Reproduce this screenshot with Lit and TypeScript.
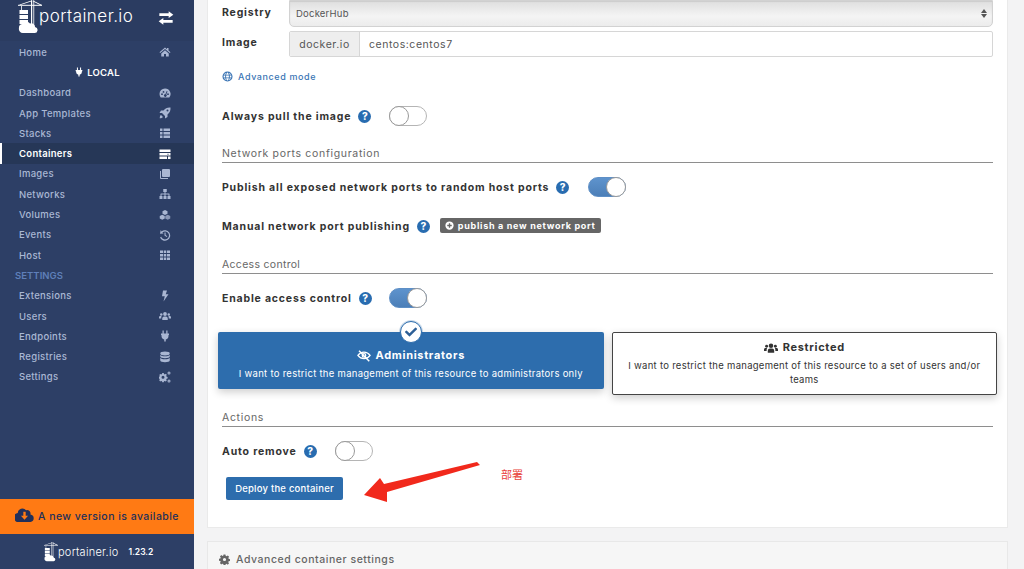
import { LitElement, html, css, svg } from "lit";
import { customElement } from "lit/decorators.js";

const ICONS: Record<string, unknown> = {
  home: svg`<path d="M12 3 1 12.5l1.400 1.600L12 6l9.600 8.100 1.400-1.600-4-3.400V4h-3v2.600z"/><path d="M4.500 15 12 8.600l7.500 6.400V21h-5.500v-5h-4v5H4.500z"/>`,
  gauge: svg`<path fill-rule="evenodd" d="M12 3a11 11 0 0 0-11 11c0 2.600.9 5 2.400 7h17.200A11 11 0 0 0 12 3zM6 12.500a1.800 1.800 0 1 1 0 3.600 1.800 1.800 0 0 1 0-3.600zm3-4.500a1.800 1.800 0 1 1 0 3.600A1.800 1.800 0 0 1 9 8zm6.500 0 1.600.8-2.700 6.200a2.700 2.700 0 1 1-1.700-.7zM18 12.500a1.800 1.800 0 1 1 0 3.600 1.800 1.800 0 0 1 0-3.600z"/>`,
  rocket: svg`<path fill-rule="evenodd" d="M23 1c-6-.5-10.500 1.500-14 6H4L1 12h5l6 6v5l5-3v-5c4.500-3.500 6.500-8 6-14zm-6 4a2 2 0 1 1 0 4 2 2 0 0 1 0-4z"/><path d="M4 16c-2 1.500-2.500 3.500-2.500 6.500C4.500 22.500 6.500 22 8 20z"/>`,
  list: svg`<path d="M2 3h5v5H2zM9 3h13v5H9zM2 10h5v5H2zM9 10h13v5H9zM2 17h5v5H2zM9 17h13v5H9z"/>`,
  server: svg`<path d="M1 3h22v5H1zM1 10h22v5H1zM1 17h15v5H1zM18 17h5v5h-5z"/><path fill="#263757" d="M17 11.500h2v2h-2z"/>`,
  clone: svg`<path d="M8 2h12a2 2 0 0 1 2 2v12a2 2 0 0 1-2 2H8a2 2 0 0 1-2-2V4a2 2 0 0 1 2-2z"/><path d="M4 6v14h14v2H4a2 2 0 0 1-2-2V6z"/>`,
  sitemap: svg`<path d="M8.500 2h7v6h-2.500v3H20a1 1 0 0 1 1 1v4h2v6h-6v-6h2v-3h-6v3h2v6H9v-6h2v-3H5v3h2v6H1v-6h2v-4a1 1 0 0 1 1-1h7V8H8.500z"/>`,
  cubes: svg`<path d="M12 2l5 2.500v5L12 12 7 9.500v-5z"/><path d="M6.500 11.500l5 2.500v5l-5 2.500-5-2.500v-5z"/><path d="M17.500 11.500l5 2.500v5l-5 2.500-5-2.500v-5z" fill-opacity=".75"/>`,
  history: svg`<path d="M3.500 2 2 9.500l7-.5-2.300-2.300A8 8 0 1 1 4.400 15.500l-2.300 1.300A10.500 10.500 0 1 0 5 5z"/><path d="M11 7h2.200v5l3.400 2.300-1.200 1.800-4.400-3z"/>`,
  th: svg`<path d="M2 3h6v5H2zM9.500 3h5v5h-5zM16 3h6v5h-6zM2 10h6v5H2zM9.500 10h5v5h-5zM16 10h6v5h-6zM2 17h6v5H2zM9.500 17h5v5h-5zM16 17h6v5h-6z"/>`,
  bolt: svg`<path d="M8 1h8l-2.500 7.500H19L9 23l2.500-10.500H6z"/>`,
  users: svg`<circle cx="12" cy="8" r="3.800"/><circle cx="4.500" cy="9" r="2.500"/><circle cx="19.500" cy="9" r="2.500"/><path d="M6.500 20v-3c0-2.500 2-4 3.500-4h4c1.500 0 3.500 1.500 3.500 4v3z"/><path d="M0 17v-2c0-2 1-3 2.500-3h3c-.8.800-1 2-1 5zM24 17v-2c0-2-1-3-2.500-3h-3c.8.800 1 2 1 5z"/>`,
  plug: svg`<path d="M7 1h2.500v6h5V1H17v6h3v3h-1v2a7 7 0 0 1-5.500 6.800V23h-3v-4.200A7 7 0 0 1 5 12v-2H4V7h3z"/>`,
  database: svg`<ellipse cx="12" cy="5" rx="9.500" ry="3.800"/><path d="M2.500 7.500c1.500 2 5 3 9.500 3s8-1 9.500-3V11c0 2-4.300 3.500-9.500 3.500S2.500 13 2.500 11zM2.500 13.500c1.500 2 5 3 9.500 3s8-1 9.500-3V19c0 2-4.300 3.500-9.500 3.500S2.500 21 2.500 19z"/>`,
  cogs: svg`<path fill-rule="evenodd" d="M7.500 5h3l.5 2 1.800.8 1.700-1.100 2 2-1 1.800.7 1.800 2 .5v3l-2 .5-.8 1.800 1.100 1.700-2 2-1.800-1-1.700.7-.5 2h-3l-.5-2-1.800-.7-1.700 1-2-2 1-1.800-.7-1.700-2-.5v-3l2-.5.8-1.800-1.100-1.700 2-2 1.800 1 1.600-.7zM9 10.500a3 3 0 1 0 0 6 3 3 0 0 0 0-6z" transform="translate(-1 -1)"/><path fill-rule="evenodd" d="M20 1a3 3 0 1 1 0 6 3 3 0 0 1 0-6zm0 2a1 1 0 1 0 0 2 1 1 0 0 0 0-2zM20 17a3 3 0 1 1 0 6 3 3 0 0 1 0-6zm0 2a1 1 0 1 0 0 2 1 1 0 0 0 0-2z"/>`,
  exchange: svg`<path d="M16 2l7 5-7 5V9H2V5h14zM8 12v3h14v4H8v3l-7-5z"/>`,
  globe: svg`<path fill-rule="evenodd" d="M12 1a11 11 0 1 0 0 22 11 11 0 0 0 0-22zM9 3.800C8 5 7.500 6.500 7.200 8H4.600A9 9 0 0 1 9 3.800zM12 3c1.200 0 2.300 2.200 2.800 5H9.200C9.700 5.200 10.800 3 12 3zm3 .8A9 9 0 0 1 19.400 8h-2.600c-.3-1.500-.8-3-1.800-4.200zM3.800 10h3.200a20 20 0 0 0 0 4H3.800a9 9 0 0 1 0-4zm5.200 0h6a20 20 0 0 1 0 4H9a20 20 0 0 1 0-4zm8 0h3.200a9 9 0 0 1 0 4H17a20 20 0 0 0 0-4zM4.600 16h2.600c.3 1.500.8 3 1.800 4.200A9 9 0 0 1 4.600 16zm4.600 0h5.600c-.5 2.800-1.600 5-2.800 5s-2.300-2.200-2.800-5zm7.600 0h2.600a9 9 0 0 1-4.400 4.200c1-1.200 1.500-2.700 1.800-4.200z"/>`,
  eyeSlash: svg`<g fill="none" stroke="currentColor"><path stroke-width="2.200" d="M1.500 11c5.500-7.500 15.500-7.500 21 0-5.500 7.500-15.500 7.500-21 0z"/><circle stroke-width="2.200" cx="12" cy="11" r="3"/><path stroke-width="2.600" d="M3.500 3 21 21"/></g>`,
  check: svg`<path d="M8.200 20.600.4 12.800a1.200 1.200 0 0 1 0-1.700l1.700-1.700a1.200 1.200 0 0 1 1.700 0L9 14.700 20.300 3.400a1.200 1.200 0 0 1 1.700 0l1.700 1.700a1.200 1.200 0 0 1 0 1.700L9.900 20.600a1.200 1.200 0 0 1-1.700 0z"/>`,
  plusCircle: svg`<path fill-rule="evenodd" d="M12 1a11 11 0 1 0 0 22 11 11 0 0 0 0-22zm-1.800 5h3.600v4.200H18v3.600h-4.200V18h-3.600v-4.200H6v-3.600h4.200z"/>`,
  cog: svg`<path fill-rule="evenodd" d="M10 1h4l.6 3 2 .9 2.600-1.700 2.800 2.800-1.700 2.600.9 2 2.800.6v4l-3 .6-.8 2 1.700 2.600-2.800 2.800-2.600-1.700-2 .8-.5 2.700h-4l-.6-3-2-.8-2.600 1.700L2 19.600l1.700-2.600-.8-2-2.900-.5v-4l3-.6.8-2L2.100 5.200 4.900 2.400l2.600 1.700 2-.8zM12 8.500a3.500 3.500 0 1 0 0 7 3.500 3.500 0 0 0 0-7z"/>`,
  cloudDown: svg`<path fill-rule="evenodd" d="M19.500 9.500A4.500 4.500 0 0 0 14 4a6 6 0 0 0-10.500 3.500A5 5 0 0 0 5 19h14.500a4.800 4.800 0 0 0 0-9.500zM10.500 6h3v5h3L12 16l-4.500-5h3z"/>`,
};

const icon = (name: string, cls = "") =>
  html`<svg class="ic ${cls}" viewBox="0 0 24 24" fill="currentColor" aria-hidden="true">${ICONS[name]}</svg>`;

const logoMark = (cls: string) => html`<svg class=${cls} viewBox="0 0 26 34" fill="#fff" aria-hidden="true">
  <path d="M0 4.800h24v1H0z"/><path d="M13 .2h1.200v24H13zM15.400 .2h.8v24h-.8z"/><path d="M1 4.800 13.500 .4l.3.800L2.400 5zM24 5 15 .5l-.3.700L23 5.600z"/>
  <path d="M1.500 10h8.500v4H1.500zM1.500 15h8.500v4H1.500zM1.500 20h8.500v4H1.500zM3 6h.8v4H3z"/>
  <path d="M1 28a3.500 3.500 0 0 1 4-4 4 4 0 0 1 7-.5 3.600 3.600 0 0 1 5 3.500 3 3 0 0 1-1 6H5a4 4 0 0 1-4-5z"/>
</svg>`;

const NAV: [string, string, string?][] = [
  ["Dashboard", "gauge"], ["App Templates", "rocket"], ["Stacks", "list"], ["Containers", "server", "active"],
  ["Images", "clone"], ["Networks", "sitemap"], ["Volumes", "cubes"], ["Events", "history"], ["Host", "th"],
];
const SETTINGS: [string, string][] = [
  ["Extensions", "bolt"], ["Users", "users"], ["Endpoints", "plug"], ["Registries", "database"], ["Settings", "cogs"],
];

@customElement("app-root")
export class AppRoot extends LitElement {
  static styles = css`
    :host { display: block; width: 1024px; height: 569px; overflow: hidden; position: relative; font-family: Inter, "Liberation Sans", sans-serif; background: #f3f3f4; }
    .page { display: flex; height: 569px; }
    .ic { width: 12px; height: 12px; display: block; flex: none; }

    .side { width: 194px; flex: none; background: #2d3f66; display: flex; flex-direction: column; color: #aab8d4; }
    .brand { height: 41px; flex: none; background: #2b3c61; display: flex; align-items: flex-start; padding: 0 0 0 18px; color: #fff; box-sizing: border-box; }
    .brand .mark { width: 26px; height: 34px; flex: none; }
    .brand .name { font-size: 17px; font-weight: 300; margin: 6px 0 0 -5px; line-height: 20px; letter-spacing: .45px; }
    .brand .sw { width: 16px; height: 16px; margin: 10px 0 0 25px; }
    .rows { display: flex; flex-direction: column; padding-top: 1px; }
    .row { height: 20.300px; display: flex; align-items: center; justify-content: space-between; padding: 0 23px 0 19px; font-size: 9.500px; font-weight: 500; letter-spacing: .3px; box-sizing: border-box; }
    .row .ic { width: 12px; height: 12px; color: #a9b6d2; }
    .row.active { background: #263757; color: #fff; font-weight: 600; box-shadow: inset 2px 0 0 #fff; }
    .row.active .ic { color: #fff; }
    .local { height: 20.300px; display: flex; align-items: center; justify-content: center; gap: 3px; color: #fff; font-size: 9.500px; font-weight: 600; letter-spacing: .2px; }
    .local .ic { width: 10px; height: 10px; }
    .sett { height: 20.300px; display: flex; align-items: center; padding-left: 15px; color: #5f7fb9; font-size: 9.500px; font-weight: 600; letter-spacing: .05px; }
    .update { margin-top: auto; height: 35px; flex: none; background: #ff7a14; color: #22305a; display: flex; align-items: center; padding-left: 15px; gap: 4px; font-size: 10.500px; font-weight: 500; letter-spacing: .45px; }
    .update .ic { width: 19px; height: 19px; }
    .foot { height: 35px; flex: none; display: flex; align-items: center; padding-left: 44px; color: #fff; box-sizing: border-box; }
    .foot .mark { width: 15px; height: 22px; flex: none; }
    .foot .name { font-size: 11px; font-weight: 300; letter-spacing: .25px; margin-left: -1px; }
    .foot .ver { font-size: 8.500px; font-weight: 600; margin-left: 10px; }

    .main { flex: 1; padding: 0 16px 0 13px; min-width: 0; display: flex; flex-direction: column; }
    .card { height: 528px; flex: none; background: #fff; border: 1px solid #eaeaea; border-top: 0; box-sizing: border-box; padding: 0 14px; color: #333; position: relative; display: flex; flex-direction: column; }
    .card2 { margin-top: 13px; height: 40px; flex: none; background: #f6f6f6; border: 1px solid #e8e8e8; box-sizing: border-box; padding: 11px 0 0 11px; display: flex; align-items: flex-start; gap: 6px; color: #666; font-size: 10.500px; font-weight: 500; letter-spacing: .55px; }
    .card2 .ic { width: 11px; height: 11px; margin-top: 1px; color: #666; }

    .field { display: flex; align-items: center; font-size: 10.500px; font-weight: 700; letter-spacing: .82px; color: #333; }
    .flabel { width: 67px; flex: none; padding-bottom: 3px; }
    .select { flex: 1; height: 27px; box-sizing: border-box; border: 1px solid #d2d2d2; border-radius: 0 0 5px 5px; background: linear-gradient(#dedede, #f4f4f4 60%, #ececec); display: flex; align-items: center; justify-content: space-between; padding: 0 5px 0 6px; font-size: 9.500px; font-weight: 400; letter-spacing: .22px; color: #555; box-shadow: inset 0 1px 1px #ccc; }
    .carets { display: flex; flex-direction: column; gap: 1px; }
    .up, .down { width: 0; height: 0; border-left: 3px solid transparent; border-right: 3px solid transparent; }
    .up { border-bottom: 4px solid #555; }
    .down { border-top: 4px solid #555; }
    .igroup { flex: 1; display: flex; height: 26px; box-sizing: border-box; border: 1px solid #d6d6d6; border-radius: 2px; font-weight: 400; font-size: 10.500px; letter-spacing: .55px; color: #555; }
    .addon { width: 69px; flex: none; background: #eeeeee; border-right: 1px solid #d6d6d6; display: flex; align-items: center; justify-content: center; border-radius: 2px 0 0 2px; }
    .ival { flex: 1; display: flex; align-items: center; padding-left: 9px; }
    .adv { display: flex; align-items: center; gap: 5px; color: #3a74b4; font-size: 9px; font-weight: 500; letter-spacing: .6px; height: 20px; margin: 9px 0 0 0; }
    .adv .ic { width: 11px; height: 11px; }
    .sw-row { height: 20px; }
    .q { width: 13px; height: 13px; border-radius: 50%; background: #286cb0; color: #fff; font-size: 10px; font-weight: 800; line-height: 13px; text-align: center; flex: none; letter-spacing: 0; margin: 0 18px 0 7px; }
    .q.near { margin-right: 10px; }
    .q.far { margin-right: 19px; }
    .q.mid { margin-right: 17px; }
    .toggle { width: 38px; height: 20px; box-sizing: border-box; border: 1px solid #b5b5b5; border-radius: 10px; background: #fff; position: relative; flex: none; }
    .toggle::after { content: ""; position: absolute; left: -1px; top: -1px; width: 20px; height: 20px; box-sizing: border-box; border-radius: 50%; background: #fff; border: 1px solid #999; }
    .toggle.on { background: linear-gradient(#5e93cd, #4c7fb8); border-color: #5e8fc6; }
    .toggle.on::after { left: auto; right: -1px; }
    .section { font-size: 10.500px; font-weight: 400; letter-spacing: .68px; color: #666; border-bottom: 1px solid #8e8e8e; height: 17px; line-height: 16px; box-sizing: border-box; }
    .section.short { letter-spacing: .3px; }
    .badge { display: flex; align-items: center; gap: 4px; background: #666; color: #fff; height: 15px; border-radius: 2px; padding: 0 5px; margin-bottom: 1px; font-size: 9px; font-weight: 700; letter-spacing: .7px; }
    .badge .ic { width: 9px; height: 9px; }

    .radios { display: grid; grid-template-columns: 1fr 1fr; gap: 8px; margin: 0 -4px; align-items: start; position: relative; }
    .radio { min-width: 0; box-sizing: border-box; text-align: center; font-size: 9.500px; line-height: 13.500px; letter-spacing: .28px; box-shadow: 0 3px 8px rgba(0,0,0,.2); border-radius: 2px; }
    .admin { height: 57px; background: #2d6dad; color: #fff; padding-top: 17px; position: relative; }
    .restr { height: 63px; background: #fff; border: 1px solid #444; color: #333; padding: 8px 15px 0; }
    .rtitle { display: flex; align-items: center; justify-content: center; gap: 5px; font-size: 11px; font-weight: 700; letter-spacing: .68px; height: 14px; margin-bottom: 4px; }
    .rtitle .ic { width: 14px; height: 14px; }
    .tick { position: absolute; left: 50%; top: -11px; margin-left: -11px; width: 22px; height: 22px; box-sizing: border-box; border-radius: 50%; background: #fff; border: 1px solid #2d6dad; color: #2d5f96; display: flex; align-items: center; justify-content: center; box-shadow: 0 0 0 1px rgba(45,109,173,.25); }
    .tick .ic { width: 12px; height: 12px; }
    .deploy { width: 117px; height: 23px; background: #2d6dad; border: 0; border-radius: 2px; color: #fff; font-family: inherit; font-size: 9.500px; font-weight: 500; letter-spacing: .22px; margin: 16px 0 0 4px; padding: 0; flex: none; }

    .arrow { position: absolute; left: 0; top: 0; width: 1024px; height: 569px; pointer-events: none; }
    .note { position: absolute; left: 501px; top: 467px; font-size: 11px; line-height: 15px; color: #e8413b; font-family: "Noto Sans CJK SC", sans-serif; }
  `;

  render() {
    return html`<div class="page">
      <aside class="side">
        <div class="brand">${logoMark("mark")}<span class="name">portainer.io</span>${icon("exchange", "sw")}</div>
        <div class="rows">
          <div class="row"><span>Home</span>${icon("home")}</div>
          <div class="local">${icon("plug")}<span>LOCAL</span></div>
          ${NAV.map(([t, i, a]) => html`<div class="row ${a ?? ""}"><span>${t}</span>${icon(i)}</div>`)}
          <div class="sett">SETTINGS</div>
          ${SETTINGS.map(([t, i]) => html`<div class="row"><span>${t}</span>${icon(i)}</div>`)}
        </div>
        <div class="update">${icon("cloudDown")}<span>A new version is available</span></div>
        <div class="foot">${logoMark("mark")}<span class="name">portainer.io</span><span class="ver">1.23.2</span></div>
      </aside>
      <main class="main">
        <section class="card">
          <div class="field">
            <span class="flabel">Registry</span>
            <div class="select"><span>DockerHub</span><span class="carets"><i class="up"></i><i class="down"></i></span></div>
          </div>
          <div class="field" style="margin-top:4px">
            <span class="flabel">Image</span>
            <div class="igroup"><span class="addon">docker.io</span><span class="ival">centos:centos7</span></div>
          </div>
          <div class="adv">${icon("globe")}<span>Advanced mode</span></div>
          <div class="field sw-row" style="margin-top:20px"><span>Always pull the image</span><span class="q">?</span><span class="toggle"></span></div>
          <div class="section" style="margin-top:20px">Network ports configuration</div>
          <div class="field sw-row" style="margin-top:14px"><span>Publish all exposed network ports to random host ports</span><span class="q far">?</span><span class="toggle on"></span></div>
          <div class="field sw-row" style="margin-top:19px"><span>Manual network port publishing</span><span class="q near">?</span><span class="badge">${icon("plusCircle")}publish a new network port</span></div>
          <div class="section short" style="margin-top:21px">Access control</div>
          <div class="field sw-row" style="margin-top:14px"><span>Enable access control</span><span class="q mid">?</span><span class="toggle on"></span></div>
          <div class="radios" style="margin-top:24px">
            <div class="radio admin">
              <span class="tick">${icon("check")}</span>
              <div class="rtitle">${icon("eyeSlash")}<span>Administrators</span></div>
              <div>I want to restrict the management of this resource to administrators only</div>
            </div>
            <div class="radio restr">
              <div class="rtitle">${icon("users")}<span>Restricted</span></div>
              <div>I want to restrict the management of this resource to a set of users and/or teams</div>
            </div>
          </div>
          <div class="section" style="margin-top:15px">Actions</div>
          <div class="field sw-row" style="margin-top:14px"><span>Auto remove</span><span class="q">?</span><span class="toggle"></span></div>
          <button class="deploy">Deploy the container</button>
        </section>
        <section class="card2">${icon("cog")}<span>Advanced container settings</span></section>
      </main>
    </div>
    <svg class="arrow" viewBox="0 0 1024 569" aria-hidden="true"><path fill="#f1291c" d="M364 495 380 478 384 484 477 462 480 465 387 492 387 502z"/></svg>
    <span class="note">部署</span>`;
  }
}
